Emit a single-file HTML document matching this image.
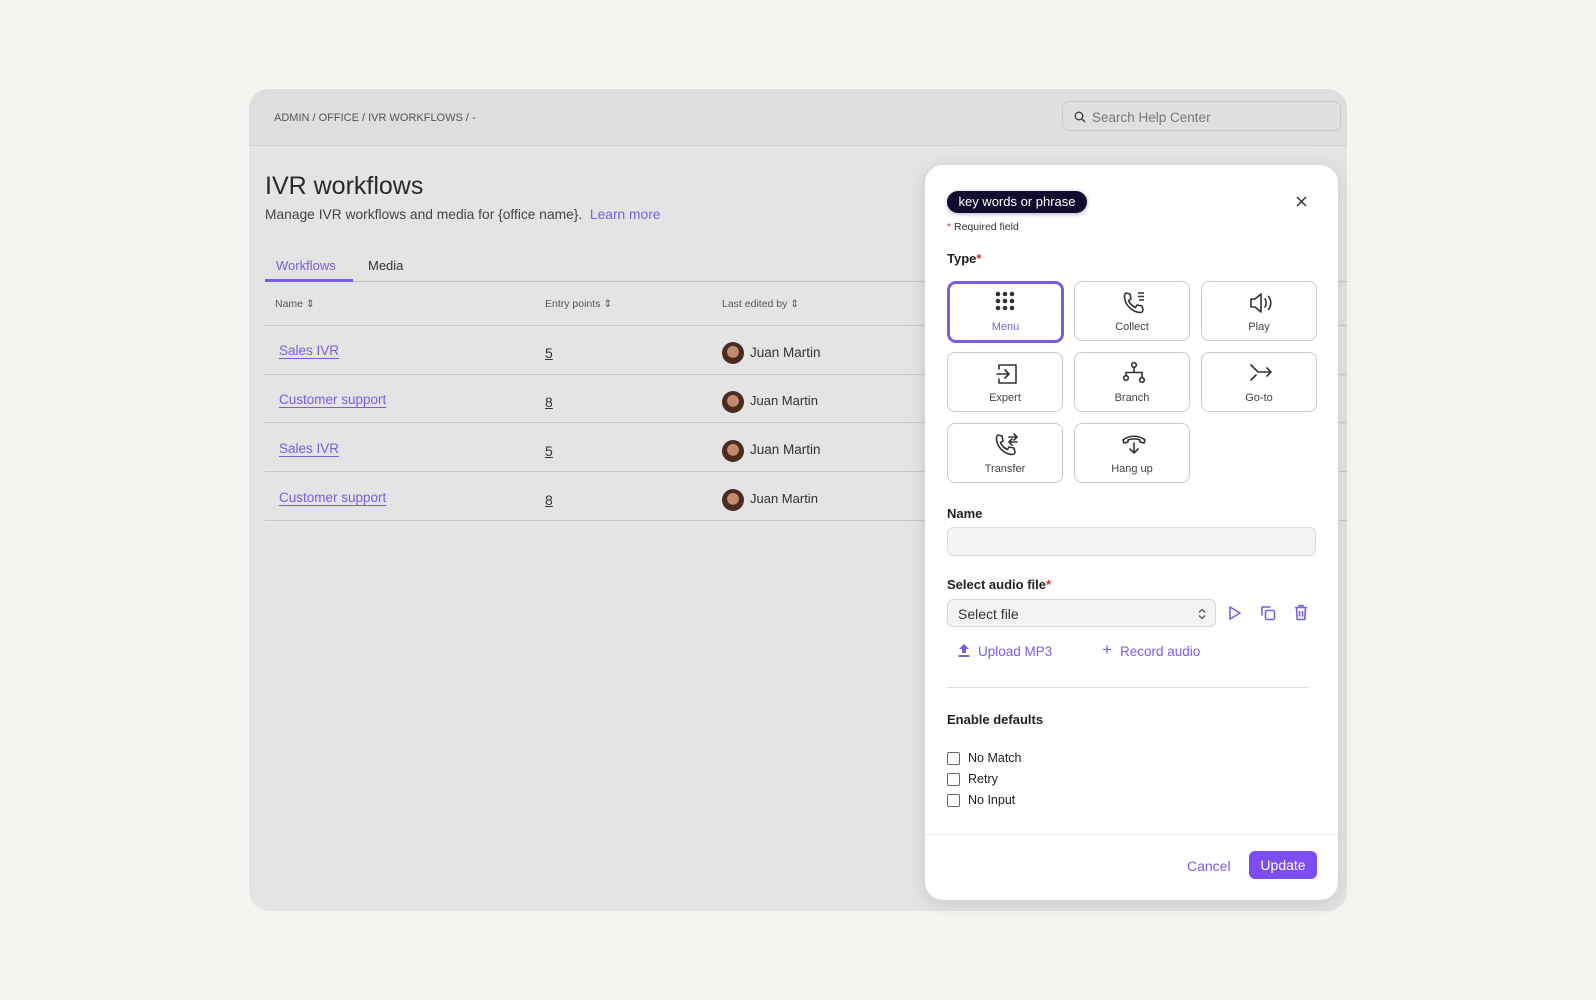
<!DOCTYPE html>
<html><head><meta charset="utf-8">
<style>
*{box-sizing:border-box;margin:0;padding:0}
body{width:1596px;height:1000px;background:#f4f4f1;font-family:"Liberation Sans",sans-serif;position:relative;overflow:hidden;color:#222}
.a{position:absolute}
.card{left:249px;top:89px;width:1098px;height:822px;background:#e4e4e4;border-radius:20px;overflow:hidden}
.hdr{left:0;top:0;width:1098px;height:57px;background:#dedede;border-bottom:1px solid #d2d2d2}
.link{color:#7c5ce0;text-decoration:underline;text-underline-offset:3px}
.row{position:absolute;left:16px;width:1082px;height:1px;background:#c8c8c8}
.av{width:22px;height:22px;border-radius:50%;background:radial-gradient(circle at 50% 45%,#c48a70 0 35%,#4a2c22 37%);}
.panel{left:925px;top:165px;width:413px;height:735px;background:#fff;border-radius:18px;box-shadow:0 4px 20px rgba(0,0,0,.12)}
.tile{position:absolute;width:116px;height:60px;border:1px solid #c9c9c9;border-radius:8px;background:#fff;text-align:center;font-size:11px;color:#444}
.tile svg{position:absolute;left:46px;top:8px}
.tile span{position:absolute;left:0;right:0;top:39px}
.lbl{font-size:13px;font-weight:bold;color:#222}
.cb{width:13px;height:13px;border:1.3px solid #666;border-radius:2px}
.ck{font-size:12.5px;color:#222}
.pur{color:#7c5ce0}
</style></head><body>
<div class="a card">
  <div class="a hdr">
    <div class="a" style="left:25px;top:23px;font-size:11px;color:#555">ADMIN / OFFICE / IVR WORKFLOWS / -</div>
    <div class="a" style="left:813px;top:12px;width:279px;height:30px;border:1px solid #c8c8c8;border-radius:7px;background:#e0e0e0">
      <svg class="a" style="left:11px;top:9px" width="12" height="12" viewBox="0 0 12 12"><circle cx="5" cy="5" r="3.8" fill="none" stroke="#444" stroke-width="1.4"/><line x1="8" y1="8" x2="11" y2="11" stroke="#444" stroke-width="1.4"/></svg>
      <div class="a" style="left:29px;top:8px;font-size:13.5px;color:#777">Search Help Center</div>
    </div>
  </div>
  <div class="a" style="left:16px;top:83px;font-size:25px;color:#2a2a2a">IVR workflows</div>
  <div class="a" style="left:16px;top:118px;font-size:13.8px;color:#444">Manage IVR workflows and media for {office name}. &nbsp;<span class="pur">Learn more</span></div>
  <div class="a" style="left:27px;top:169px;font-size:13px;color:#7c5ce0">Workflows</div>
  <div class="a" style="left:119px;top:169px;font-size:13px;color:#333">Media</div>
  <div class="a" style="left:16px;top:192px;width:1082px;height:1px;background:#c4c4c4"></div>
  <div class="a" style="left:16px;top:190px;width:88px;height:3px;background:#7c5ce0"></div>
  <div class="a" style="left:26px;top:209px;font-size:10.5px;color:#555">Name ⇕</div>
  <div class="a" style="left:296px;top:209px;font-size:10.5px;color:#555">Entry points ⇕</div>
  <div class="a" style="left:473px;top:209px;font-size:10.5px;color:#555">Last edited by ⇕</div>
  <div class="row" style="top:236px"></div>
  <div class="row" style="top:285px"></div>
  <div class="row" style="top:333px"></div>
  <div class="row" style="top:382px"></div>
  <div class="row" style="top:431px"></div>
  <div class="a link" style="left:30px;top:254px;font-size:13.5px">Sales IVR</div>
  <div class="a link" style="left:30px;top:303px;font-size:13.5px">Customer support</div>
  <div class="a link" style="left:30px;top:352px;font-size:13.5px">Sales IVR</div>
  <div class="a link" style="left:30px;top:401px;font-size:13.5px">Customer support</div>
  <div class="a" style="left:296px;top:256px;font-size:14px;color:#333;text-decoration:underline">5</div>
  <div class="a" style="left:296px;top:305px;font-size:14px;color:#333;text-decoration:underline">8</div>
  <div class="a" style="left:296px;top:354px;font-size:14px;color:#333;text-decoration:underline">5</div>
  <div class="a" style="left:296px;top:403px;font-size:14px;color:#333;text-decoration:underline">8</div>
  <div class="a av" style="left:473px;top:253px"></div><div class="a" style="left:501px;top:256px;font-size:13.5px;color:#333">Juan Martin</div>
  <div class="a av" style="left:473px;top:302px"></div><div class="a" style="left:501px;top:304px;font-size:13px;color:#333">Juan Martin</div>
  <div class="a av" style="left:473px;top:351px"></div><div class="a" style="left:501px;top:353px;font-size:13.5px;color:#333">Juan Martin</div>
  <div class="a av" style="left:473px;top:400px"></div><div class="a" style="left:501px;top:402px;font-size:13px;color:#333">Juan Martin</div>
</div>

<div class="a panel">
  <div class="a" style="left:22px;top:26px;width:140px;height:22px;background:#120b2e;border-radius:11px;color:#fff;font-size:13px;line-height:22px;text-align:center;box-shadow:0 1px 4px rgba(60,30,120,.4)">key words or phrase</div>
  <svg class="a" style="left:371px;top:31px" width="11" height="11" viewBox="0 0 11 11"><path d="M1 1L10 10M10 1L1 10" stroke="#333" stroke-width="1.5"/></svg>
  <div class="a" style="left:22px;top:56px;font-size:10.5px;color:#333"><span style="color:#c33">*</span> Required field</div>
  <div class="a lbl" style="left:22px;top:86px">Type<span style="color:#c33">*</span></div>

  <div class="tile" style="left:22px;top:116px;border:3px solid #7c5ce0;border-radius:9px;width:117px;height:62px">
    <svg style="left:44px;top:6px" width="22" height="22" viewBox="0 0 22 22" fill="#333"><circle cx="4" cy="4" r="2.3"/><circle cx="11" cy="4" r="2.3"/><circle cx="18" cy="4" r="2.3"/><circle cx="4" cy="11" r="2.3"/><circle cx="11" cy="11" r="2.3"/><circle cx="18" cy="11" r="2.3"/><circle cx="4" cy="18" r="2.3"/><circle cx="11" cy="18" r="2.3"/><circle cx="18" cy="18" r="2.3"/></svg>
    <span style="top:37px;color:#7c5ce0">Menu</span></div>
  <div class="tile" style="left:149px;top:116px">
    <svg width="26" height="26" viewBox="0 0 26 26" fill="none" stroke="#333" stroke-width="1.6" stroke-linejoin="round"><path d="M5 3l4 1 1 5-2.5 1.5c1.5 3.5 3.5 5.5 7 7L16 15l5 1 1 4c0 1.5-1.5 2.5-3 2.5C11 22 4 15 3.5 7 3.5 5 4 3.5 5 3z"/><path d="M17 3h6M17 6.5h6M18 10h5"/></svg><span>Collect</span></div>
  <div class="tile" style="left:276px;top:116px">
    <svg width="26" height="26" viewBox="0 0 26 26" fill="none" stroke="#333" stroke-width="1.6" stroke-linejoin="round" stroke-linecap="round"><path d="M3 9h4l6-5v18l-6-5H3z"/><path d="M17 9c1.5 2 1.5 6 0 8M20.5 6.5c3 3.5 3 9.5 0 13"/></svg><span>Play</span></div>

  <div class="tile" style="left:22px;top:187px">
    <svg width="26" height="26" viewBox="0 0 26 26" fill="none" stroke="#333" stroke-width="1.6" stroke-linejoin="round" stroke-linecap="round"><path d="M5 8V4h17v18H5v-4"/><path d="M3 13h12M11 9l4 4-4 4"/></svg><span>Expert</span></div>
  <div class="tile" style="left:149px;top:187px">
    <svg width="26" height="26" viewBox="0 0 26 26" fill="none" stroke="#333" stroke-width="1.6"><circle cx="13" cy="4" r="2.3"/><circle cx="5" cy="17" r="2.3"/><circle cx="21" cy="19" r="2.3"/><path d="M13 6.3v5M5 14.7V11.5h16v5.2"/></svg><span>Branch</span></div>
  <div class="tile" style="left:276px;top:187px">
    <svg width="26" height="26" viewBox="0 0 26 26" fill="none" stroke="#333" stroke-width="1.6" stroke-linecap="round" stroke-linejoin="round"><path d="M3 4l7 7h13M19 7l4 4-4 4M3 19l5-5"/></svg><span>Go-to</span></div>

  <div class="tile" style="left:22px;top:258px">
    <svg width="26" height="26" viewBox="0 0 26 26" fill="none" stroke="#333" stroke-width="1.6" stroke-linejoin="round" stroke-linecap="round"><path d="M4 3l4 1 1 5-2.5 1.5c1.5 3.5 3.5 5.5 7 7L15 15l5 1 1 4c0 1.5-1.5 2.5-3 2.5C10 22 3 15 2.5 7 2.5 5 3 3.5 4 3z"/><path d="M15 5h8M20 2l3 3-3 3M23 10h-8M18 7l-3 3 3 3"/></svg><span>Transfer</span></div>
  <div class="tile" style="left:149px;top:258px">
    <svg width="26" height="26" viewBox="0 0 26 26" fill="none" stroke="#333" stroke-width="1.6" stroke-linejoin="round" stroke-linecap="round"><path d="M2 8c6-5 16-5 22 0l-1 3-4-1v-2c-4-1.5-8-1.5-12 0v2l-4 1z"/><path d="M13 11v10M9 17l4 4 4-4"/></svg><span>Hang up</span></div>

  <div class="a lbl" style="left:22px;top:341px">Name</div>
  <div class="a" style="left:22px;top:362px;width:369px;height:29px;background:#f3f3f3;border:1px solid #ddd;border-radius:6px"></div>

  <div class="a lbl" style="left:22px;top:412px">Select audio file<span style="color:#c33">*</span></div>
  <div class="a" style="left:22px;top:434px;width:269px;height:28px;background:#f3f3f3;border:1px solid #d6d6d6;border-radius:6px">
    <div class="a" style="left:10px;top:6px;font-size:14px;color:#333">Select file</div>
    <svg class="a" style="left:250px;top:8px" width="8" height="12" viewBox="0 0 8 12" fill="none" stroke="#555" stroke-width="1.3"><path d="M1 4.5l3-3 3 3M1 7.5l3 3 3-3"/></svg>
  </div>
  <svg class="a" style="left:303px;top:440px" width="14" height="16" viewBox="0 0 14 16" fill="none" stroke="#7c5ce0" stroke-width="1.6" stroke-linejoin="round"><path d="M2 2l10 6-10 6z"/></svg>
  <svg class="a" style="left:335px;top:440px" width="16" height="16" viewBox="0 0 16 16" fill="none" stroke="#7c5ce0" stroke-width="1.6" stroke-linejoin="round"><rect x="5.5" y="5.5" width="9" height="9" rx="1.5"/><path d="M10 2.5V2H2v8h.5"/></svg>
  <svg class="a" style="left:369px;top:439px" width="14" height="17" viewBox="0 0 14 17" fill="none" stroke="#7c5ce0" stroke-width="1.6" stroke-linejoin="round"><path d="M1 3.5h12M5 3.5V1.5h4v2M2.5 3.5l.7 12h7.6l.7-12M5.5 7v5.5M8.5 7v5.5"/></svg>

  <svg class="a" style="left:33px;top:479px" width="12" height="13" viewBox="0 0 12 13" fill="#7c5ce0"><path d="M6 0l5 5H8v4H4V5H1z"/><rect x="0.5" y="11" width="11" height="2"/></svg>
  <div class="a pur" style="left:53px;top:479px;font-size:13.5px">Upload MP3</div>
  <div class="a pur" style="left:177px;top:475px;font-size:17px">+</div>
  <div class="a pur" style="left:195px;top:479px;font-size:13.5px">Record audio</div>

  <div class="a" style="left:22px;top:522px;width:361px;height:1px;background:#ddd"></div>
  <div class="a lbl" style="left:22px;top:547px">Enable defaults</div>

  <div class="a cb" style="left:22px;top:587px"></div><div class="a ck" style="left:43px;top:586px">No Match</div>
  <div class="a cb" style="left:22px;top:608px"></div><div class="a ck" style="left:43px;top:607px">Retry</div>
  <div class="a cb" style="left:22px;top:629px"></div><div class="a ck" style="left:43px;top:628px">No Input</div>

  <div class="a" style="left:0;top:669px;width:413px;height:1px;background:#ececec"></div>
  <div class="a pur" style="left:262px;top:693px;font-size:14px">Cancel</div>
  <div class="a" style="left:324px;top:686px;width:68px;height:28px;background:#7c4df5;border-radius:6px;color:#fff;font-size:14px;line-height:28px;text-align:center">Update</div>
</div>
</body></html>
